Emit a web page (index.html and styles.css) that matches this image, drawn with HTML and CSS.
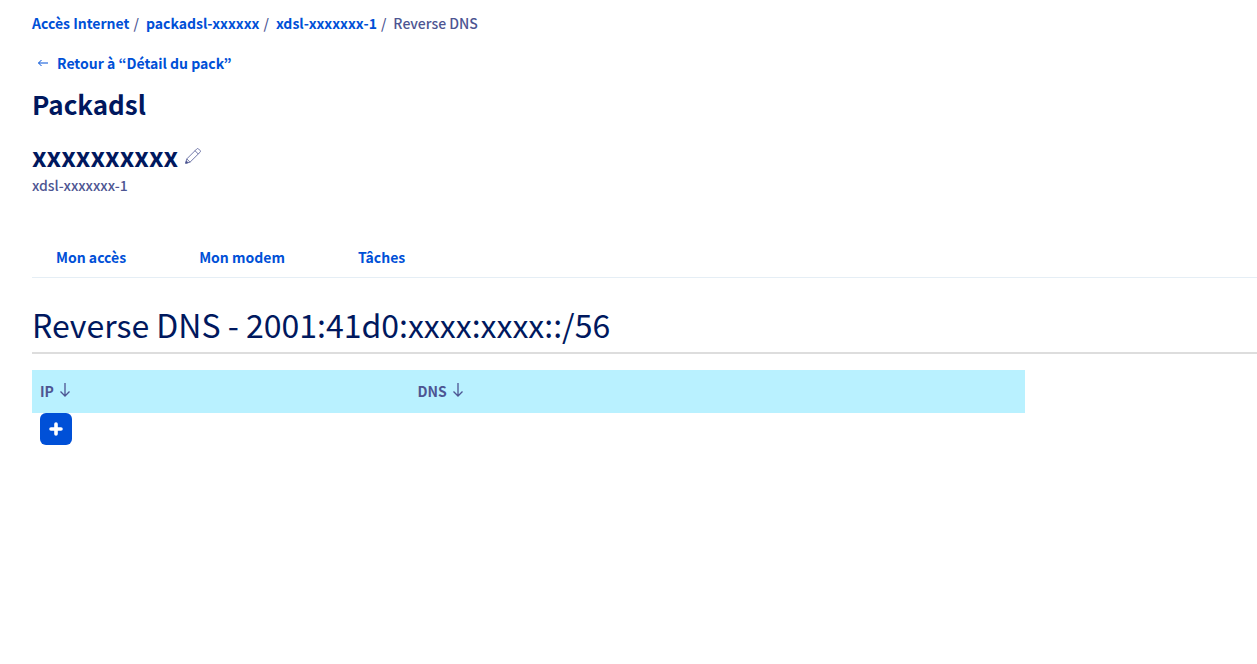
FILE: index.html
```html
<!DOCTYPE html>
<html lang="fr">
<head>
<meta charset="utf-8">
<meta name="viewport" content="width=device-width, initial-scale=1">
<title>Reverse DNS</title>
<link rel="stylesheet" href="styles.css">
</head>
<body>
<main class="page">
  <nav class="breadcrumb" aria-label="Fil d'Ariane">
    <a class="link" href="#">Accès Internet</a><span class="sep">/</span>
    <a class="link" href="#">packadsl-xxxxxx</a><span class="sep">/</span>
    <a class="link" href="#">xdsl-xxxxxxx-1</a><span class="sep">/</span>
    <span>Reverse DNS</span>
  </nav>
  <a class="link back" href="#">
    <svg class="back-icon" viewBox="0 0 12 12" aria-hidden="true"><path d="M11 6H1.500M4.500 3l-3 3 3 3"/></svg>
    <span>Retour à “Détail du pack”</span>
  </a>
  <h1 class="title">Packadsl</h1>
  <div class="name-row">
    <h2 class="title">xxxxxxxxxx</h2>
    <button class="edit" type="button" aria-label="Modifier">
      <svg viewBox="0 0 16 16" aria-hidden="true"><path d="M.7 15.300l1.100-4.400L11.800.9c.5-.5 1.200-.5 1.700 0l1.600 1.600c.5.5.5 1.200 0 1.700L5 14.200zM10 2.700l3.300 3.300M1.800 10.900L5 14.200"/><path class="tip" d="M.7 15.300l.6-2.400 1.800 1.800z"/></svg>
    </button>
  </div>
  <p class="service">xdsl-xxxxxxx-1</p>
  <nav class="tabs" aria-label="Sections">
    <a class="link" href="#">Mon accès</a>
    <a class="link" href="#">Mon modem</a>
    <a class="link" href="#">Tâches</a>
  </nav>
  <h2 class="heading">Reverse DNS - 2001:41d0:xxxx:xxxx::/56</h2>
  <table class="grid">
    <thead>
      <tr>
        <th class="col-ip" scope="col"><span class="sort">IP <svg viewBox="0 0 12 16" aria-hidden="true"><path d="M6 1v13M1.500 9.500L6 14l4.500-4.500"/></svg></span></th>
        <th scope="col"><span class="sort">DNS <svg viewBox="0 0 12 16" aria-hidden="true"><path d="M6 1v13M1.500 9.500L6 14l4.500-4.500"/></svg></span></th>
      </tr>
    </thead>
    <tbody>
      <tr>
        <td colspan="2"><button class="add" type="button" aria-label="Ajouter"><svg viewBox="0 0 14 14" aria-hidden="true"><path d="M7 2v10M2 7h10"/></svg></button></td>
      </tr>
    </tbody>
  </table>
</main>
</body>
</html>
```
FILE: styles.css
```css
* { box-sizing: border-box; }
body {
  margin: 0;
  background: #fff;
  color: #4d5592;
  font: 500 14px/24px "Noto Sans CJK JP", "Noto Sans", sans-serif;
}
h1, h2, p { margin: 0; }
svg { fill: none; stroke: currentColor; }
.page { padding: 11px 0 32px 32px; }
.link { color: #0050d7; font-weight: 700; text-decoration: none; }
.breadcrumb { display: flex; }
.sep { margin: 0 7px 0 4px; }
.back { display: flex; align-items: center; gap: 8px; margin-top: 16px; padding-left: 5px; }
.back-icon { width: 12px; height: 12px; }
.title { color: #00185e; font-size: 26px; font-weight: 700; line-height: 32px; }
.back + .title { margin-top: 13px; }
.name-row { display: flex; align-items: center; gap: 7px; margin-top: 20px; }
.service { margin-top: 1px; }
.edit { width: 16px; height: 16px; padding: 0; border: 0; background: none; color: #4d5592; }
.edit svg { display: block; width: 16px; height: 16px; stroke-width: 0.8; }
.tip { fill: currentColor; }
.tabs { display: flex; gap: 73px; margin-top: 48px; padding: 0 24px 8px; border-bottom: 1px solid #e5eef5; }
.heading {
  margin-top: 22px;
  padding-bottom: 4px;
  border-bottom: 2px solid #ddd;
  color: #00185e;
  font-size: 32px;
  font-weight: 400;
  line-height: 48px;
}
.grid { width: 81.1%; margin-top: 16px; border-collapse: collapse; table-layout: fixed; }
.grid th { height: 43px; padding: 0 8px 2px; background: #b9f1ff; text-align: left; }
.grid td { padding: 0 8px; }
.col-ip { width: 38%; }
.sort { display: flex; align-items: center; gap: 5px; }
.sort svg { width: 12px; height: 18px; padding-bottom: 2px; stroke-width: 1.3; }
.add {
  display: grid;
  place-items: center;
  width: 32px;
  height: 32px;
  padding: 0;
  border: 0;
  border-radius: 6px;
  background: #0050d7;
  color: #fff;
}
.add svg { width: 14px; height: 14px; stroke-width: 3.6; stroke-linecap: round; }
```
